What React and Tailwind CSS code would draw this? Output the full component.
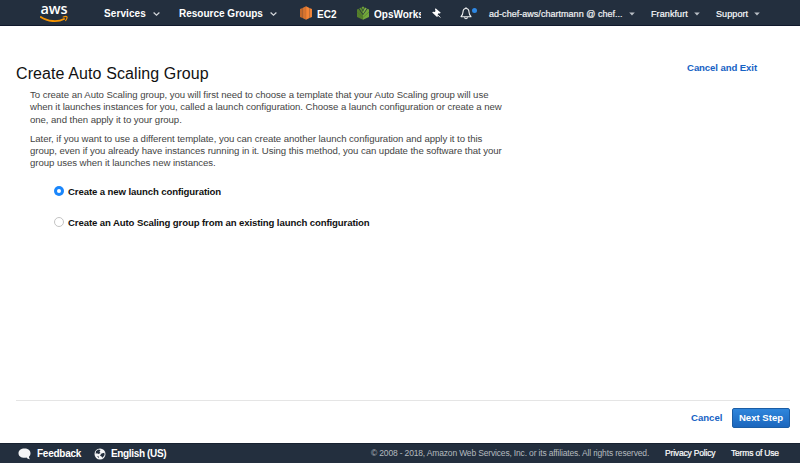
import React from "react";

function AwsLogo() {
  return (
    <div className="ml-[40px] flex h-[20px] w-[28px] flex-col items-center">
      <span className="h-[12px] font-['Open_Sans',sans-serif] text-[14.500px] leading-[12px] font-semibold tracking-[-0.1px] text-white">aws</span>
      <svg className="block h-[8px] w-[28px] shrink-0" viewBox="0 0 28 8" fill="none">
        <path d="M.8 2C7.500 6.700 18 7.300 24 4" stroke="#f79400" strokeWidth="1.900" strokeLinecap="round" />
        <path d="M23.200 2C25 1.400 26.600 1.300 26.900 1.800C27.200 2.500 26.600 4.300 25.700 5.500" stroke="#f79400" strokeWidth="1.200" strokeLinecap="round" />
      </svg>
    </div>
  );
}

function Chevron() {
  return (
    <svg className="block h-[6px] w-[7px]" viewBox="0 0 7 6" fill="none">
      <path d="M.6 1.500L3.500 4.200L6.400 1.500" stroke="#d4d8dc" strokeWidth="1.200" />
    </svg>
  );
}

function Caret() {
  return (
    <svg className="block h-[4px] w-[6px] -translate-y-px" viewBox="0 0 6 4">
      <path d="M.2.4H5.800L3 3.600Z" fill="#b9bfc5" />
    </svg>
  );
}

function Ec2Icon() {
  return (
    <svg className="block h-[14px] w-[12px] shrink-0" viewBox="0 0 12 14">
      <path d="M0 3L2.500 2V12L0 11Z" fill="#c4682a" />
      <path d="M2.500 2L6 .3V13.700L2.500 12Z" fill="#d87430" />
      <path d="M6 .3L9.500 2V12L6 13.700Z" fill="#f68536" />
      <path d="M9.500 2L12 3V11L9.500 12Z" fill="#f08338" />
      <path d="M3 3V11.500M6 1V13" stroke="#c4682a" strokeWidth=".5" />
    </svg>
  );
}

function OpsWorksIcon() {
  return (
    <svg className="block h-[14px] w-[12px] shrink-0" viewBox="0 0 12 14">
      <path d="M0 3.500L1.500 2.800L6 9V13.700L0 11Z" fill="#55802c" />
      <path d="M12 3.500L10.500 2.800L6 9V13.700L12 11Z" fill="#74a83c" />
      <path d="M2.200 2.400L4 1.500L6 5.500V8Z" fill="#5b8a2e" />
      <path d="M9.800 2.400L8 1.500L6 5.500V8Z" fill="#80b345" />
      <path d="M4.600 1.200L6 .4L7.400 1.200L6 4.200Z" fill="#6c9f35" />
      <path d="M0 6L6 11.500L12 6" stroke="#49702a" strokeWidth=".5" fill="none" />
    </svg>
  );
}

function PinIcon() {
  return (
    <svg className="block h-[10px] w-[9px] shrink-0" viewBox="0 0 9 10" fill="#fff">
      <path d="M3.600.3L8.800 4.800L7.800 5.400L6.600 5.300L5.700 6.300L5.900 8.200L5 9L.2 4.600L1 3.800L2.800 3.900L3.500 3L3 1.200Z" />
      <path d="M5.300 6.500L8.300 9.500" stroke="#fff" strokeWidth="1" />
    </svg>
  );
}

function BellIcon() {
  return (
    <svg className="block h-[13px] w-[12px] shrink-0" viewBox="0 0 12 13" fill="none" stroke="#f1f3f4" strokeWidth="1.100" strokeLinejoin="round">
      <path d="M6 1.500C3.900 1.500 3.100 3 3 5C2.900 7.400 2.200 8.500 1 9.700H11C9.800 8.500 9.100 7.400 9 5C8.900 3 8.100 1.500 6 1.500Z" />
      <path d="M6 .3V1.500M4.600 10.300C4.700 12.300 7.300 12.300 7.400 10.300" />
    </svg>
  );
}

function Header() {
  return (
    <header className="flex h-[26px] shrink-0 items-center border-b border-[#10192c] bg-[#232f3e] pt-px font-bold whitespace-nowrap text-white">
      <AwsLogo />
      <div className="ml-[36px] flex w-[75px] items-center pt-px text-[10px] tracking-[0.1px]">
        <span className="w-[49px]">Services</span>
        <Chevron />
      </div>
      <div className="flex w-[121px] items-center pt-px text-[10px]">
        <span className="w-[91px]">Resource Groups</span>
        <Chevron />
      </div>
      <div className="flex w-[57px] items-center gap-[5px] text-[10px]">
        <Ec2Icon />
        <span className="pt-[2px]">EC2</span>
      </div>
      <div className="flex w-[75px] items-center gap-[5px] text-[10px]">
        <OpsWorksIcon />
        <span className="w-[47px] overflow-hidden pt-[2px]">OpsWorks</span>
      </div>
      <PinIcon />
      <div className="ml-[19px] flex w-[29px] items-start pt-px">
        <BellIcon />
        <span className="mt-px size-[5px] rounded-full bg-[#2e88e5]" />
      </div>
      <div className="flex w-[162px] items-center pt-[3px] text-[9px] font-normal tracking-[0.03px] [-webkit-text-stroke:0.2px_#f1f3f4]">
        <span className="w-[140px] text-[#f1f3f4]">ad-chef-aws/chartmann @ chef...</span>
        <Caret />
      </div>
      <div className="flex w-[65px] items-center pt-[3px] text-[9px] font-normal tracking-[0.1px] [-webkit-text-stroke:0.2px_#f1f3f4]">
        <span className="w-[43px]">Frankfurt</span>
        <Caret />
      </div>
      <div className="flex items-center pt-[3px] text-[9px] font-normal tracking-[0.1px] [-webkit-text-stroke:0.2px_#f1f3f4]">
        <span className="w-[38px]">Support</span>
        <Caret />
      </div>
    </header>
  );
}

function Option({ label, checked }) {
  return (
    <label className="flex h-[11px] items-center gap-[4px] whitespace-nowrap text-[9.600px] leading-[11px] font-bold tracking-[-0.11px] text-[#111]">
      <span className={checked ? "flex size-[10px] items-center justify-center rounded-full bg-[#1a86fb]" : "size-[10px] rounded-full border border-[#c4c4c4] bg-white"}>
        {checked && <span className="size-[4px] rounded-full bg-white" />}
      </span>
      <span>{label}</span>
    </label>
  );
}

function Footer() {
  return (
    <footer className="flex h-[20px] shrink-0 items-center border-t border-[#172130] bg-[#232f3e] font-bold whitespace-nowrap text-white">
      <svg className="ml-[18px] block h-[12px] w-[13px]" viewBox="0 0 13 12" fill="#f4f5f6">
        <path d="M6.500.5C2.900.5.5 2.500.5 5.200C.5 8 3 9.800 6.500 9.800C7.200 9.800 7.900 9.700 8.500 9.600C9.400 10.800 10.800 11.300 12 11.200C11.300 10.500 10.900 9.600 10.900 8.700C12 7.800 12.500 6.600 12.500 5.200C12.500 2.500 10 .5 6.500.5Z" />
      </svg>
      <span className="ml-[6px] w-[57px] text-[10px] tracking-[-0.25px]">Feedback</span>
      <svg className="block h-[12px] w-[12px]" viewBox="0 0 12 12">
        <circle cx="6" cy="6" r="5.500" fill="#f4f5f6" />
        <path d="M2 3L4.500 1.500L6.500 2L5.500 3.700L6.500 5L4.500 6L3 5.200L1.700 5.800ZM7.500 5.500L10.300 4.700L10.600 7L8.500 9.800L7.500 8.500L6 7.500ZM3 8L4.800 8.500L5 10.200Z" fill="#232f3e" />
      </svg>
      <span className="ml-[5px] w-[260px] text-[10px] tracking-[-0.35px]">English (US)</span>
      <span className="w-[294px] text-[8.500px] font-normal tracking-[-0.165px] text-[#b4babf]">© 2008 - 2018, Amazon Web Services, Inc. or its affiliates. All rights reserved.</span>
      <span className="w-[66px] text-[8.500px] font-normal tracking-[-0.18px] [-webkit-text-stroke:0.2px_#fff]">Privacy Policy</span>
      <span className="text-[8.500px] font-normal tracking-[-0.18px] [-webkit-text-stroke:0.2px_#fff]">Terms of Use</span>
    </footer>
  );
}

export default function App() {
  return (
    <div className="flex h-[463px] w-[800px] flex-col overflow-hidden bg-white font-['Liberation_Sans',Arial,sans-serif]">
      <Header />
      <main className="flex min-h-0 flex-1 flex-col">
        <div className="flex h-[63px] justify-between pr-[43px] pl-[16px]">
          <h1 className="mt-[38px] text-[16px] leading-[20px] tracking-[0.1px] whitespace-nowrap text-[#111]">Create Auto Scaling Group</h1>
          <a className="mt-[36px] text-[9.600px] leading-[12px] font-bold tracking-[-0.1px] whitespace-nowrap text-[#1662c4]">Cancel and Exit</a>
        </div>
        <div className="flex flex-col gap-[7px] pl-[30px] text-[9.600px] leading-[12.300px] tracking-[-0.05px] whitespace-nowrap text-[#444]">
          <p>
            To create an Auto Scaling group, you will first need to choose a template that your Auto Scaling group will use
            <br />
            when it launches instances for you, called a launch configuration. Choose a launch configuration or create a new
            <br />
            one, and then apply it to your group.
          </p>
          <p>
            Later, if you want to use a different template, you can create another launch configuration and apply it to this
            <br />
            group, even if you already have instances running in it. Using this method, you can update the software that your
            <br />
            group uses when it launches new instances.
          </p>
        </div>
        <div className="mt-[16px] flex flex-col gap-[20px] pl-[54px]">
          <Option label="Create a new launch configuration" checked />
          <Option label="Create an Auto Scaling group from an existing launch configuration" />
        </div>
        <div className="mt-auto mr-[10px] ml-[16px] flex h-[43px] items-start justify-end border-t border-[#e5e5e5] pt-[7px] text-[9.600px] font-bold whitespace-nowrap">
          <a className="w-[41px] leading-[20px] text-[#1662c4]">Cancel</a>
          <button className="h-[20px] w-[58px] rounded-[2px] border border-[#1b5da5] bg-linear-to-b from-[#2f86dc] to-[#1b66bd] text-center leading-[18px] text-white">Next Step</button>
        </div>
      </main>
      <Footer />
    </div>
  );
}
